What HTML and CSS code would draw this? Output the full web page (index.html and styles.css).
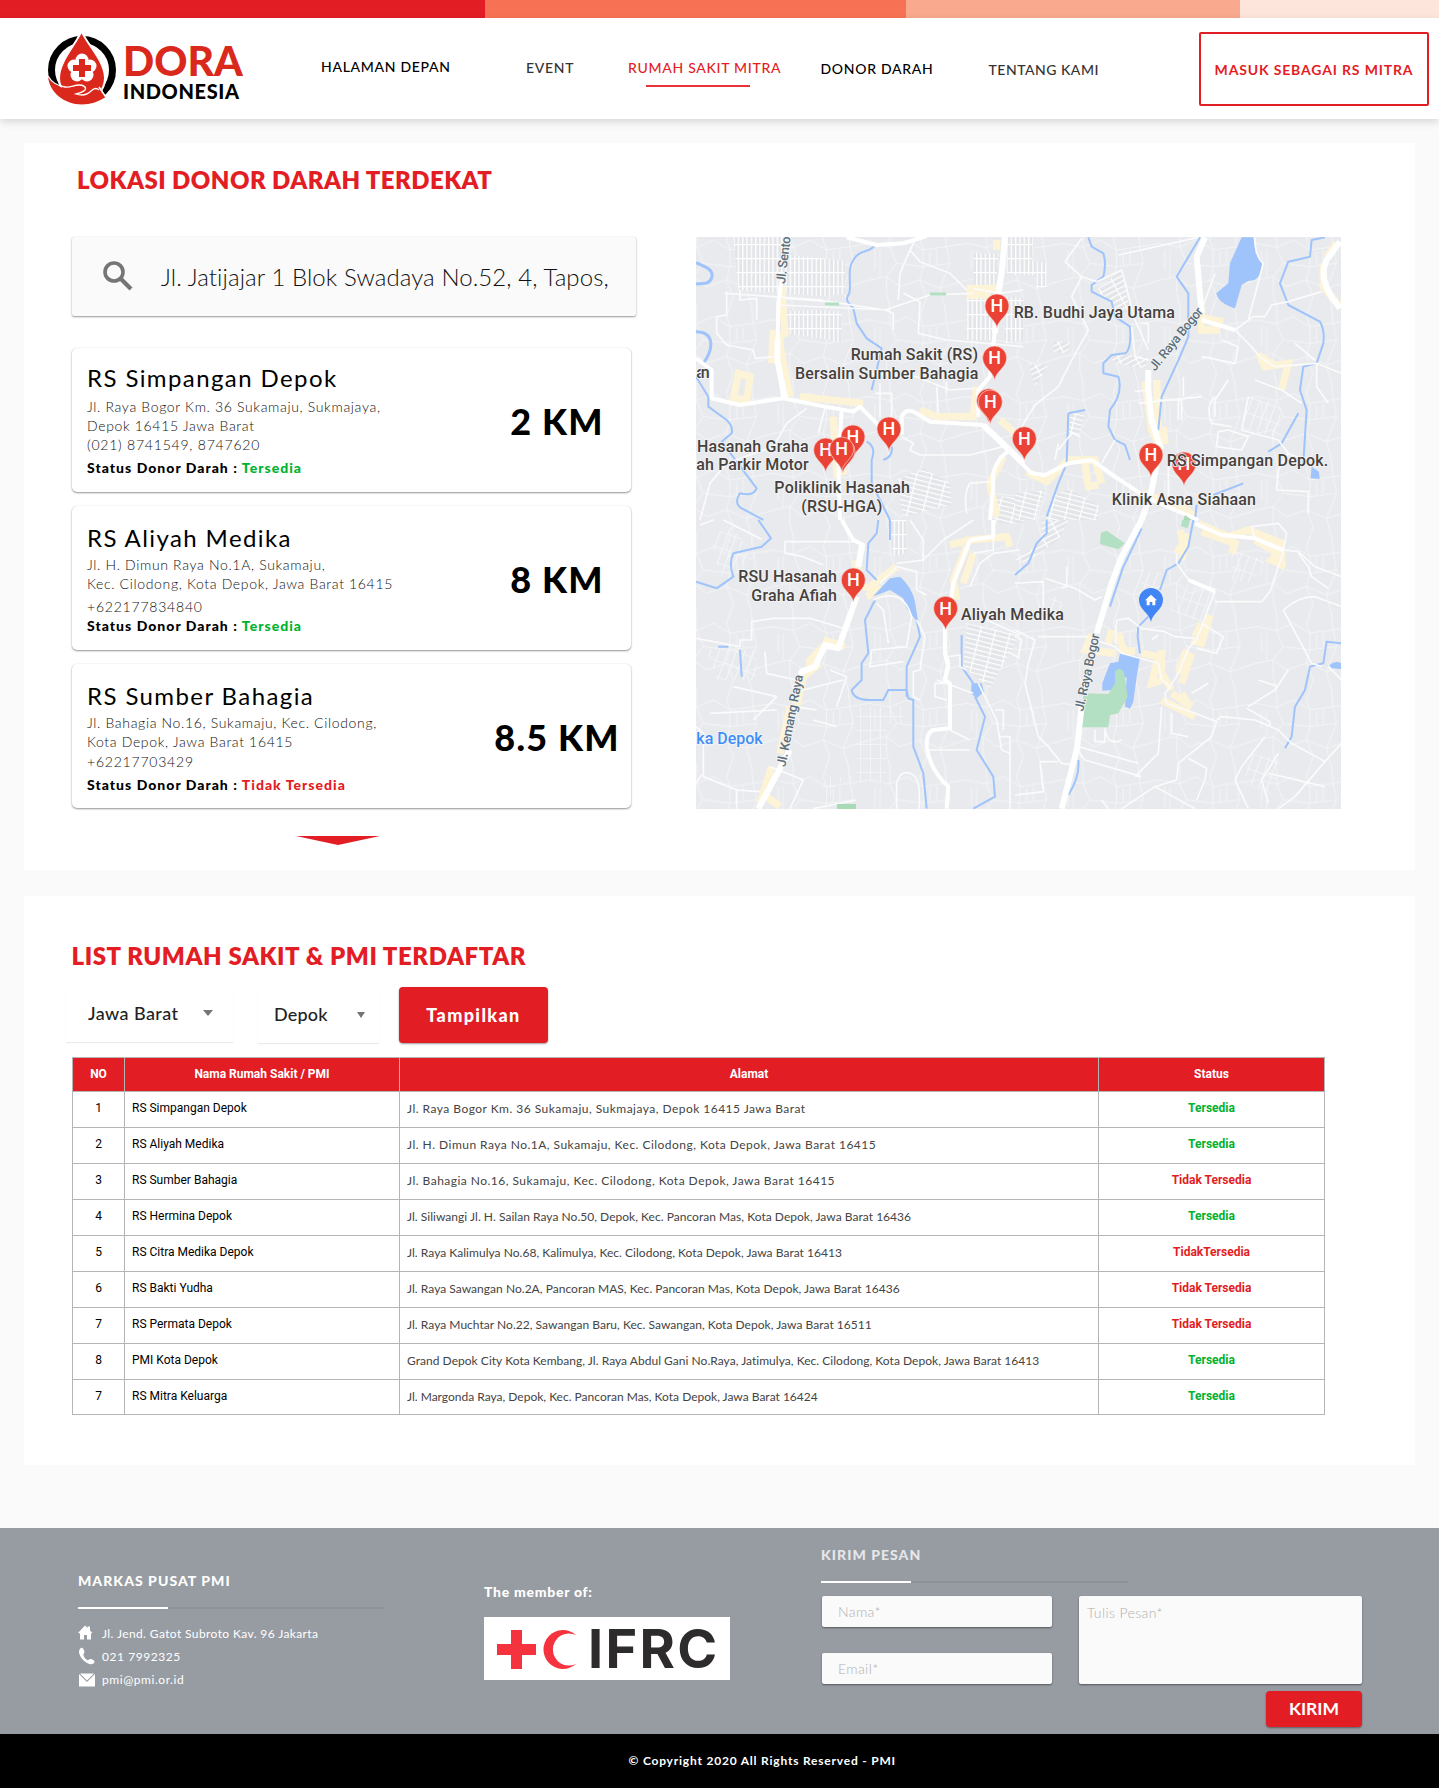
FILE: index.html
```html
<!DOCTYPE html>
<html lang="id">
<head>
<meta charset="utf-8">
<title>DORA Indonesia - Rumah Sakit Mitra</title>
<link rel="stylesheet" href="styles.css">
</head>
<body>
<div class="strip"><span class="s1"></span><span class="s2"></span><span class="s3"></span><span class="s4"></span></div>
<header class="header">
  <div class="logo">
    <svg class="logo-mark" viewBox="0 0 72 76" width="72" height="76">
      <circle cx="36" cy="40" r="30.5" fill="none" stroke="#000" stroke-width="7"/>
      <path d="M35.500 1C40 13 59 31 59 48a23 23 0 0 1-46 0C13 31 31 13 35.500 1z" fill="#da291c" stroke="#fff" stroke-width="2"/>
      <path d="M2 46c2 6 10 11 16 12 6 0 10-2 15-1 3 1 5 3 8 2l12-4 7 12C52 72 44 74.500 36 74.500 18 74.500 3 62 2 46z" fill="#da291c"/>
      <path d="M2 46c4 7 10 10 17 11 5 1 9-2 14-2 4 0 8 2 6 5-2 2-5 3-9 4 6 2 11 1 15-3 3-3 6-3 8-1" fill="none" stroke="#fff" stroke-width="1.300"/>
      <path d="M53 57l7.500 11" stroke="#fff" stroke-width="1.500"/>
      <g fill="#fff"><circle cx="36" cy="30" r="6.500"/><circle cx="28" cy="36" r="6.500"/><circle cx="44" cy="36" r="6.500"/><circle cx="31" cy="45" r="6.500"/><circle cx="41" cy="45" r="6.500"/><circle cx="36" cy="38" r="8"/></g>
      <path d="M33 29h6v6h6v6h-6v6h-6v-6h-6v-6h6z" fill="#da291c"/>
    </svg>
    <div class="logo-text"><span class="dora">DORA</span><span class="indo">INDONESIA</span></div>
  </div>
  <nav class="nav">
    <a class="n1">HALAMAN DEPAN</a>
    <a class="n2">EVENT</a>
    <a class="n3">RUMAH SAKIT MITRA</a>
    <a class="n4">DONOR DARAH</a>
    <a class="n5">TENTANG KAMI</a>
  </nav>
  <a class="login"><span>MASUK SEBAGAI RS MITRA</span></a>
</header>

<main>
<section class="panel near">
  <h2>LOKASI DONOR DARAH TERDEKAT</h2>
  <div class="near-body">
    <div class="left">
      <div class="search">
        <svg width="30" height="30" viewBox="0 0 30 30"><circle cx="11" cy="11" r="9" fill="none" stroke="#757575" stroke-width="3.600"/><path d="M17.500 17.500L28 28" stroke="#757575" stroke-width="4.200"/></svg>
        <span class="query">Jl. Jatijajar 1 Blok Swadaya No.52, 4, Tapos,</span>
      </div>
      <article class="hosp h1">
        <div class="info">
          <h3>RS Simpangan Depok</h3>
          <p>Jl. Raya Bogor Km. 36 Sukamaju, Sukmajaya,</p>
          <p>Depok 16415 Jawa Barat</p>
          <p class="phone">(021) 8741549, 8747620</p>
          <div class="status"><span>Status Donor Darah :</span> <b class="ok">Tersedia</b></div>
        </div>
        <div class="km"><span>2 KM</span></div>
      </article>
      <article class="hosp h2">
        <div class="info">
          <h3>RS Aliyah Medika</h3>
          <p>Jl. H. Dimun Raya No.1A, Sukamaju,</p>
          <p>Kec. Cilodong, Kota Depok, Jawa Barat 16415</p>
          <p class="phone">+622177834840</p>
          <div class="status"><span>Status Donor Darah :</span> <b class="ok">Tersedia</b></div>
        </div>
        <div class="km"><span>8 KM</span></div>
      </article>
      <article class="hosp h3">
        <div class="info">
          <h3>RS Sumber Bahagia</h3>
          <p>Jl. Bahagia No.16, Sukamaju, Kec. Cilodong,</p>
          <p>Kota Depok, Jawa Barat 16415</p>
          <p class="phone">+62217703429</p>
          <div class="status"><span>Status Donor Darah :</span> <b class="no">Tidak Tersedia</b></div>
        </div>
        <div class="km"><span>8.5 KM</span></div>
      </article>
      <div class="more"></div>
    </div>
    <svg class="map" viewBox="696 237 645 572" width="645" height="572">
      <defs>
        <pattern id="streets" width="290" height="230" patternUnits="userSpaceOnUse" patternTransform="scale(.3333)">
          <path d="M0 40L60 52L110 30L160 60L230 50L290 40M0 150L50 140L90 170L150 150L210 175L290 150M60 0V52L80 100L50 140V190L60 230M160 0L150 30L160 60V110L150 150L170 200L160 230M230 50L240 100L210 175L225 230M225 0L230 50M80 100L160 110L240 100M15 60V120M30 60V140M200 60V100M180 65V105" fill="none" stroke="#f6f7f9" stroke-width="2.500"/>
        </pattern>
        <pattern id="blocks" width="13" height="42" patternUnits="userSpaceOnUse"><rect width="13" height="42" fill="#e3e5e9"/><path d="M0 0V42M0 0H13" stroke="#fff" stroke-width="8"/></pattern>
        <pattern id="blocksH" width="44" height="14" patternUnits="userSpaceOnUse" patternTransform="rotate(14)"><rect width="44" height="14" fill="#e3e5e9"/><path d="M0 0V14M0 0H44" stroke="#fff" stroke-width="7"/></pattern>
        <pattern id="blocksR" width="46" height="15" patternUnits="userSpaceOnUse" patternTransform="rotate(-28)"><rect width="46" height="15" fill="#e3e5e9"/><path d="M0 0V15M0 0H46" stroke="#fff" stroke-width="7"/></pattern>
        <pattern id="faint" width="30" height="42" patternUnits="userSpaceOnUse"><path d="M0 0V42M0 0H30" stroke="#f5f6f8" stroke-width="5"/></pattern>
        <pattern id="lanes" width="24" height="46" patternUnits="userSpaceOnUse" patternTransform="rotate(20)"><path d="M0 0V46M0 0H24" stroke="#f7f8fa" stroke-width="5"/></pattern>
        <g id="pin"><path d="M0 65C-5 40-36 28-36 0a36 36 0 0 1 72 0C36 28 5 40 0 65z" fill="#ea4335" stroke="#f8d5d2" stroke-width="2"/><text y="19" text-anchor="middle" class="pin-h">H</text></g>
      </defs>
      <rect x="696" y="237" width="645" height="572" fill="#e8eaed"/>
      <rect x="696" y="237" width="645" height="572" fill="url(#streets)"/>
      <!-- north west -->
      <g transform="translate(690 230) scale(.3333)" class="tile">
        <path d="M130 22H310L300 75L465 92V192L390 198L145 180Z" fill="url(#blocks)"/>
        <path d="M365 240L455 245V335L365 322ZM275 245L365 240V320L275 310Z" fill="url(#blocks)"/>
        <path d="M850 70H925L915 200H850ZM830 205L910 200V330H830ZM950 22H1000V130H950ZM945 200L1000 205V330L945 340Z" fill="url(#blocks)"/>
        <path d="M620 750L700 715L780 760L785 825L640 860Z" fill="url(#blocksH)"/>
        <path d="M910 800H1000V880H910Z" fill="url(#blocksH)"/>
        <path class="y" d="M275 170L285 310L265 320L300 500M145 430L180 440L170 510L130 505ZM250 300L245 400M330 500L520 520M690 540L740 560H860M860 470L850 560M920 30V60M830 175H920M830 195H900M930 570L990 620M940 680L900 760L920 860M430 560L440 730L470 720"/>
        <path class="w" d="M18 98C40 110 70 115 66 140C60 165 40 160 18 162M18 305C70 305 75 350 40 400"/>
        <path class="w2" d="M555 45C540 70 510 55 490 90C470 120 485 160 478 190C460 215 480 220 490 235L500 280L530 325L575 355L560 420L545 480M18 440L55 500V530L110 570Q130 590 125 610L95 635L200 775Q190 800 150 790Q130 820 155 835L220 870M530 635Q560 650 545 690V760L600 870M605 650Q610 680 580 690"/>
        <path class="n" d="M110 185V255L80 260V310L110 345L190 360L195 385L255 380M150 180V210L200 205V270M105 190L400 210M285 205L420 215L585 240L720 195L850 190M265 225L600 240M850 175L930 190L1000 180M660 60L690 95L780 130L830 180M660 60L680 22M660 60L630 130L625 210M640 190L690 215L685 310L770 330L1000 350M585 240L610 250V300M350 535L290 580L250 650L110 700L60 760L30 870M405 535L385 610M570 460V560M555 490H605V560M635 620L670 640L660 660L690 675H840L940 650M740 470L745 550M770 455V490M540 430L680 440L780 480L850 475M830 850Q820 790 840 760L900 755"/>
        <path class="m" d="M470 22L560 45L640 40L710 18M18 385L65 420V505L150 525L280 505L405 530L490 545L510 530L570 590L635 610V560Q650 530 680 550L720 575L880 585M865 560V480L900 440L915 300M880 585L960 660L1000 700M960 660Q900 700 910 770L900 870M275 150L265 220L262 380L280 510M455 545L445 700L450 870"/>
        <path class="m b" d="M945 22L935 130L920 220L915 310M262 330V390L285 505M880 585L1000 700"/>
        <path d="M405 222H447M720 192H768" stroke="#b1dfc0" stroke-width="9"/>
      </g>
      <!-- north east -->
      <g transform="translate(1015 230) scale(.3333)" class="tile">
        <path d="M0 22H55L50 90L95 100V170L65 175L60 135H0Z" fill="url(#blocks)"/>
        <path d="M245 180L320 120L345 240L320 250Z" fill="url(#blocksR)"/>
        <path d="M115 330L165 340L160 370L115 365ZM40 400L100 405L60 470ZM280 370L400 380L390 415L300 400Z" fill="url(#blocksR)"/>
        <path d="M110 800L160 775L250 825V870H90ZM0 790L90 780L60 870H0ZM160 550H210L190 620H160Z" fill="url(#blocksH)"/>
        <path d="M700 500L800 520L790 620L680 595Z" fill="url(#lanes)"/>
        <path class="y" d="M35 725L95 755L160 690L240 690L260 760M390 455L410 600L440 660M425 450L430 600L450 640L445 590M560 230V300L615 300M565 265L625 275M730 370L750 410L820 400L800 480M740 380L780 410M925 100V170L975 230M935 80L965 40M210 700L220 770L250 765M380 790L500 830L540 860"/>
        <path d="M680 22H715L722 70Q745 90 740 110Q735 155 700 152L680 165L660 235Q610 220 604 190L640 160L645 100Z" fill="#9fc3fb"/>
        <path class="w2" d="M220 22L230 50L265 70Q275 100 265 140L230 165V185L290 215L300 260L345 290Q350 360 330 370L290 375L265 400V430L310 440Q325 490 285 540L280 590L300 630L330 645L345 690M555 22L485 140L520 190V320L495 380L440 500L430 600M930 22L890 30L885 80L820 95L795 160L820 225L915 275Q930 300 925 340L905 400L865 410L855 480L875 540L865 700M850 550L800 640L760 665M160 550L210 540M160 550L155 700L130 760L95 860M595 795L685 760"/>
        <path d="M887 745L890 710L912 725L914 747Z" fill="#9fc3fb"/>
        <path class="w2" d="M545 825L540 870M20 800"/>
        <path class="n" d="M150 95L200 25M150 95L200 140L245 155L320 120L360 270L400 360M200 140L170 200L220 300L165 400L130 470L60 525L20 590M310 75L550 22M600 130L560 240M720 22Q720 80 745 100L700 270M660 300L715 260H750L770 225L820 215L920 185M660 300L700 340L740 385L780 410L905 400L980 430M905 400V470L940 520M700 500L680 600L790 630L820 670L790 720L785 780L880 785V850M815 670L880 690M300 630L260 700M130 660L170 610L195 620M360 485L400 480M370 520L560 500M505 440V500M420 510H500V570M490 510V570M350 290L360 380L400 390M380 280H400V340M560 380L660 400L670 350L620 330M600 500Q570 530 590 580L650 590M610 605L640 600L700 620L680 660L605 650ZM640 450L600 510V560M460 700V800M720 450L800 480L860 520M840 340L900 390M120 690L130 640"/>
        <path class="m" d="M0 680L50 730L90 735L160 700L230 690L300 740L390 800L480 840L550 870M560 270L660 300"/>
        <path class="m b" d="M570 22L545 80L560 250M400 420V480L410 570L435 650L410 780L380 870M975 35L935 90Q905 150 975 235"/>
        <path d="M510 855L530 870H505Z" fill="#a8dab5"/>
      </g>
      <!-- south west -->
      <g transform="translate(690 520) scale(.3333)" class="tile">
        <path d="M830 310L990 345L900 505L820 440Z" fill="url(#blocksH)"/>
        <path d="M600 0H650V100L610 110Z" fill="url(#blocks)"/>
        <path d="M500 560H640V610H590V785H440V830H400V770H500Z" fill="url(#faint)"/>
        <path d="M50 390H200V480H80ZM60 50L120 20L200 110L90 170Z" fill="url(#lanes)"/>
        <path class="y" d="M400 360L465 380M410 370L360 420V460M390 430L340 470L320 560M300 560L270 700M245 740L210 850M230 830L270 860M495 120L520 200L570 210L530 230M540 200L620 140M780 75L840 60L950 50L960 80M830 80L790 180L800 240M850 100L820 190"/>
        <path d="M548 230L600 175L630 170Q665 200 675 245L685 310L650 265L640 235L600 210Z" fill="#9fc3fb"/>
        <path class="w2" d="M205 0L243 55L215 80L130 100Q115 130 130 170L80 205L18 185M565 0L560 40L535 70L530 150L560 180M555 240L525 300L535 400L515 430V480L485 510Q490 540 540 540H580L595 510H650L655 535L670 540V680L700 760L710 866M680 300L690 350L650 440V530M600 0V60M815 345V440L850 490M855 530L885 590L860 690L910 770L915 830L850 866M150 390L155 470M85 380H115"/>
        <path d="M845 490L875 490L882 515L860 535L843 520Z" fill="#9fc3fb"/>
        <path class="n" d="M30 15L70 0M100 0L215 58M490 65H395L285 65V100L340 110L400 135M18 355L150 380V360H185V305L250 295L360 295L460 325M225 395L230 460L320 480M420 450L470 470L440 560M18 620L40 640V770L140 810V866M35 765L18 790M140 810L210 815M570 190L620 140L680 155V210L710 225M620 130L700 120L760 60L850 0M660 0L700 60L700 120M560 250L580 270L595 370M550 240Q640 200 665 290L650 380L545 390L540 440L640 425M680 300L705 350L690 450L670 455V530L690 540M910 50V90L850 100M840 200L870 130L910 100L990 90M865 490L920 600L935 690L960 700V866M915 570H940V630M930 650H960V730M890 300L990 345M955 395L990 415M775 410L810 405V440L830 450M770 490H735V530L770 540M620 866V790Q630 750 660 760Q690 770 688 830V866M850 520L740 480M370 600L440 620M310 560L380 570M340 510L460 480M240 740L340 780L300 866M370 866L500 840M130 500L260 530L190 600M260 570L60 580M780 630L840 660M710 690L840 690"/>
        <path class="m" d="M455 0L490 60L520 75L505 140M840 60L910 50V0M840 60L790 190L780 260M765 320V400L775 430L765 480"/>
        <path class="m b" d="M517 70L505 140M500 230L445 385L405 375L375 440L335 455L320 500M300 690L205 866"/>
        <path class="m" d="M765 320V400L775 440L765 480L780 490V625L730 630Q710 635 710 680Q720 750 775 800L770 866"/>
        <rect x="441" y="852" width="57" height="15" fill="#a8dab5"/>
      </g>
      <!-- south east -->
      <g transform="translate(1015 520) scale(.3333)" class="tile">
        <path d="M500 190L600 215L560 310L465 270Z" fill="url(#lanes)"/>
        <path d="M100 230H140V300H90ZM650 90L750 120L720 190L650 180ZM380 150L440 160L420 220L370 200ZM700 700L800 720L770 820L690 790Z" fill="url(#lanes)"/>
        <path d="M80 0H160L130 60L30 130L0 120L80 70Z" fill="url(#blocksR)"/>
        <path class="y" d="M495 30L505 70L485 100M520 40L500 120M550 10L640 50L700 30L800 70V140M560 35L660 70L650 100M720 60L790 100L770 120L810 140M230 345L210 390L300 400M290 330L280 370M310 340L325 390L360 395M380 400L430 410L410 490L440 480M440 390V460L470 510M585 285L560 370L530 360M560 310L540 350M515 390L490 460M530 400L500 490M440 540L540 590M470 520L530 560M500 520L525 560"/>
        <path d="M315 400L375 412L365 470L355 545L345 566L330 560L335 470L290 510L262 512V490L285 430L310 425Z" fill="#9fc3fb"/>
        <path d="M300 455Q315 435 328 460L338 530L310 580L285 585L280 622H200L205 520L280 522L300 490Z" fill="#b3dfc2"/>
        <path d="M258 38L275 32L330 70L310 88L255 72ZM502 0H525L518 25L498 18Z" fill="#b3dfc2"/>
        <path class="w2" d="M95 0V40L65 70L40 130L0 165M380 25L340 110L325 140L285 260M535 0L520 80L490 130L455 150L435 210M400 290L370 320L368 350L375 400M980 370L935 365L925 430L885 440L870 510L840 560L830 650L810 685M190 720Q195 770 160 825"/>
        <path d="M943 436Q960 420 980 430V447L950 445Z" fill="#9fc3fb"/>
        <path class="n" d="M485 100V130L525 185L600 215L580 265L545 360L520 385L490 460L465 500L450 520L455 550L540 580L605 605L590 650L490 730L485 780L420 800L320 866M600 245L740 245L765 215L805 95L720 60L710 20L790 10L815 40L805 90M805 90L850 95L900 140L980 170M850 100L880 140L890 170L940 205M545 385L605 400L625 350L560 310M300 370L305 300L340 295L380 325L450 335L480 350L540 355M410 360L430 345M240 360L300 380L320 400L430 430L440 480L465 500M0 330L60 360L40 430L30 490L70 650L100 680L140 730L180 735M0 350L20 360L10 410M0 190L85 185V260M90 175L180 205L240 240L260 230M155 140V200L140 205M70 350H220M75 725H130M75 730L85 815L0 825M605 600L620 590L720 600L790 630L830 670L930 725L840 830L790 866M930 725L980 670M695 565L765 605V620M520 715L575 745L570 780L545 840M420 800L540 866M805 270Q850 230 900 230L980 260M805 270L890 430L920 440M980 480L940 440M820 450L780 510L700 560M730 480L790 500M190 650Q180 690 210 720L380 770M190 680L370 730M270 630Q280 680 320 660M240 630V665H270V625M440 560L430 700L360 770M470 580V640L520 650M530 520L580 490M750 650L680 740L660 780L700 866M760 760L930 800M790 700L740 780L760 850M260 840L280 866"/>
        <path class="m" d="M540 10L620 45L720 55L805 90M520 180L600 213"/>
        <path class="m b" d="M380 0L320 110L290 190L245 340M200 560L185 690L140 866"/>
      </g>
      <!-- labels and pins -->
      <g transform="translate(690 230) scale(.3333)" class="labels">
        <text x="285" y="162" transform="rotate(-83 285 162)" class="road" textLength="142">Jl. Sento</text>
        <text x="971" y="263" textLength="484">RB. Budhi Jaya Utama</text>
        <text x="482" y="391" textLength="382">Rumah Sakit (RS)</text>
        <text x="315" y="447" textLength="550">Bersalin Sumber Bahagia</text>
        <text x="19" y="443" textLength="40">an</text>
        <text x="21" y="665" textLength="335">Hasanah Graha</text>
        <text x="19" y="721" textLength="337">ah Parkir Motor</text>
        <text x="253" y="789" textLength="407">Poliklinik Hasanah</text>
        <text x="334" y="845" textLength="243">(RSU-HGA)</text>
        <use href="#pin" x="921" y="228"/><use href="#pin" x="914" y="384"/><use href="#pin" x="896" y="512"/><use href="#pin" x="901" y="516"/>
        <use href="#pin" x="597" y="597"/><use href="#pin" x="489" y="621"/><use href="#pin" x="407" y="660"/><use href="#pin" x="459" y="663"/><use href="#pin" x="455" y="657"/>
      </g>
      <g transform="translate(1015 230) scale(.3333)" class="labels">
        <text x="420" y="425" transform="rotate(-51 420 425)" class="road" textLength="232">Jl. Raya Bogor</text>
        <use href="#pin" x="28" y="626"/><use href="#pin" x="507" y="702"/><use href="#pin" x="408" y="675"/>
        <text x="455" y="708" textLength="485">RS Simpangan Depok.</text>
        <text x="290" y="824" textLength="433">Klinik Asna Siahaan</text>
      </g>
      <g transform="translate(690 520) scale(.3333)" class="labels">
        <text x="145" y="185" textLength="296">RSU Hasanah</text>
        <text x="184" y="243" textLength="257">Graha Afiah</text>
        <text x="813" y="300" textLength="309">Aliyah Medika</text>
        <text x="19" y="672" class="blue" textLength="199">ka Depok</text>
        <text x="286" y="742" transform="rotate(-79 286 742)" class="road" textLength="280">Jl. Kemang Raya</text>
        <use href="#pin" x="490" y="180"/><use href="#pin" x="767" y="265"/>
      </g>
      <g transform="translate(1015 520) scale(.3333)" class="labels">
        <text x="205" y="575" transform="rotate(-78 205 575)" class="road" textLength="236">Jl. Raya Bogor</text>
        <path d="M408 305C403 280 372 268 372 240a36 36 0 0 1 72 0C444 268 413 280 408 305z" fill="#4285f4"/>
        <path d="M390 241L408 224L426 241H421V256H412V246H404V256H395V241Z" fill="#fff"/>
      </g>
    </svg>
  </div>
</section>

<section class="panel list">
  <h2>LIST RUMAH SAKIT &amp; PMI TERDAFTAR</h2>
  <div class="filters">
    <div class="select sel1"><span>Jawa Barat</span><i></i></div>
    <div class="select sel2"><span>Depok</span><i></i></div>
    <a class="show"><span>Tampilkan</span></a>
  </div>
  <table>
    <colgroup><col class="c1"><col class="c2"><col class="c3"><col class="c4"></colgroup>
    <thead><tr><th>NO</th><th>Nama Rumah Sakit / PMI</th><th>Alamat</th><th>Status</th></tr></thead>
    <tbody>
      <tr class="wide"><td>1</td><td>RS Simpangan Depok</td><td>Jl. Raya Bogor Km. 36 Sukamaju, Sukmajaya, Depok 16415 Jawa Barat</td><td class="ok">Tersedia</td></tr>
      <tr class="wide"><td>2</td><td>RS Aliyah Medika</td><td>Jl. H. Dimun Raya No.1A, Sukamaju, Kec. Cilodong, Kota Depok, Jawa Barat 16415</td><td class="ok">Tersedia</td></tr>
      <tr class="wide"><td>3</td><td>RS Sumber Bahagia</td><td>Jl. Bahagia No.16, Sukamaju, Kec. Cilodong, Kota Depok, Jawa Barat 16415</td><td class="no">Tidak Tersedia</td></tr>
      <tr><td>4</td><td>RS Hermina Depok</td><td>Jl. Siliwangi Jl. H. Sailan Raya No.50, Depok, Kec. Pancoran Mas, Kota Depok, Jawa Barat 16436</td><td class="ok">Tersedia</td></tr>
      <tr><td>5</td><td>RS Citra Medika Depok</td><td>Jl. Raya Kalimulya No.68, Kalimulya, Kec. Cilodong, Kota Depok, Jawa Barat 16413</td><td class="no">TidakTersedia</td></tr>
      <tr><td>6</td><td>RS Bakti Yudha</td><td>Jl. Raya Sawangan No.2A, Pancoran MAS, Kec. Pancoran Mas, Kota Depok, Jawa Barat 16436</td><td class="no">Tidak Tersedia</td></tr>
      <tr><td>7</td><td>RS Permata Depok</td><td>Jl. Raya Muchtar No.22, Sawangan Baru, Kec. Sawangan, Kota Depok, Jawa Barat 16511</td><td class="no">Tidak Tersedia</td></tr>
      <tr><td>8</td><td>PMI Kota Depok</td><td>Grand Depok City Kota Kembang, Jl. Raya Abdul Gani No.Raya, Jatimulya, Kec. Cilodong, Kota Depok, Jawa Barat 16413</td><td class="ok">Tersedia</td></tr>
      <tr class="last"><td>7</td><td>RS Mitra Keluarga</td><td>Jl. Margonda Raya, Depok, Kec. Pancoran Mas, Kota Depok, Jawa Barat 16424</td><td class="ok">Tersedia</td></tr>
    </tbody>
  </table>
</section>
</main>

<footer>
  <div class="foot">
    <div class="office">
      <h4>MARKAS PUSAT PMI</h4>
      <div class="rule"></div>
      <div class="contact"><svg width="18" height="16" viewBox="0 0 18 16"><path d="M0 8L7 .5L9.500 3V1.500H12V5.500L14.500 8L13 8.500V14.500H9V10H6V14.500H2V8.500Z" fill="#fff"/></svg><span class="address">Jl. Jend. Gatot Subroto Kav. 96 Jakarta</span></div>
      <div class="contact"><svg width="18" height="18" viewBox="0 0 18 18"><path d="M3 1C5 0 6 3 6.500 5C6.800 6 5 7 5.500 8.500C6.500 11 8 12.500 9.500 13C11 13 11.500 11.500 13 12C15 12.500 17 14 16.500 15C15.500 17.500 12.500 18 9 16C4 13 1 8 1 4.500C1 3 2 1.500 3 1Z" fill="#fff"/></svg><span>021 7992325</span></div>
      <div class="contact"><svg width="18" height="16" viewBox="0 0 18 16"><path d="M1 3L9 11L17 3V15.500H1ZM2 2.500H16L9 9.500Z" fill="#fff"/></svg><span>pmi@pmi.or.id</span></div>
    </div>
    <div class="member">
      <h5>The member of:</h5>
      <div class="ifrc">
        <svg width="82" height="63" viewBox="0 0 82 63"><path d="M27 13H38V27H52V38H38V52H27V38H13V27H27Z" fill="#f5333f"/><path d="M92 18A19.500 19.500 0 1 0 92 47A16.100 16.100 0 1 1 92 18Z" fill="#f5333f"/></svg>
        <span>IFRC</span>
      </div>
    </div>
    <form class="message">
      <h4>KIRIM PESAN</h4>
      <div class="rule"></div>
      <div class="fields">
        <div class="col"><label class="field"><span>Nama*</span></label><label class="field"><span>Email*</span></label></div>
        <div class="col2"><label class="area"><span>Tulis Pesan*</span></label><a class="send"><span>KIRIM</span></a></div>
      </div>
    </form>
  </div>
  <div class="copy"><span>© Copyright 2020 All Rights Reserved - PMI</span></div>
</footer>
</body>
</html>
```
FILE: styles.css
```css
*{box-sizing:border-box}
body{margin:0;width:1439px;background:#fafafa;font-family:Lato,"Open Sans",sans-serif;color:#000}
h2,h3,h4,h5,p{margin:0;white-space:nowrap}
span,a,b{white-space:nowrap}
.ok{color:#00b22d}
.no{color:#e31d24}

.strip{display:flex;height:18px}
.s1{width:485px;background:#e31d24}
.s2{width:421px;background:#f77254}
.s3{width:334px;background:#f9aa8e}
.s4{flex:1;background:#fde5db}

.header{display:flex;align-items:flex-start;height:101px;background:#fff;box-shadow:0 3px 8px rgba(0,0,0,.14);position:relative}
.logo{display:flex;width:321px;padding:12px 0 0 46px}
.logo-mark{margin-top:0;flex:none}
.logo-text{display:flex;flex-direction:column;padding:9px 0 0 5px}
.dora{font-size:41px;line-height:44px;font-weight:900;color:#da291c}
.indo{font-size:20px;line-height:24px;font-weight:900;margin-top:-4px;letter-spacing:.62px}
.nav{display:flex;align-items:flex-start;width:878px;font-size:14px;line-height:20px;font-weight:500;letter-spacing:.7px}
.nav a{flex:none}
.n1{width:205px;margin-top:39px}
.n2{width:102px;margin-top:40px;color:#333}
.n3{width:192.5px;margin-top:40px;color:#e31d24}
.n3::after{content:"";display:block;width:104px;height:2px;margin:7px 0 0 18px;background:#ea3339}
.n4{width:168px;margin-top:41px}
.n5{margin-top:42px;color:#333;letter-spacing:.51px}
.login{display:flex;align-items:center;justify-content:center;width:230px;height:74px;margin-top:14px;border:2px solid #e31d24;border-radius:2px;font-size:14px;font-weight:700;letter-spacing:.85px;color:#e31d24}

.panel{width:1391px;margin-left:24px;background:#fff}
.panel h2{font-size:24px;line-height:30px;font-weight:800;color:#e31d24;letter-spacing:.57px}
.near{height:727px;margin-top:24px;padding:21px 0 0 48px}
.near h2{margin-left:5px;line-height:32px;letter-spacing:.44px}
.near-body{display:flex;margin-top:41px}
.left{width:624px}
.search{display:flex;align-items:center;width:564px;height:79px;padding-left:31px;background:#fafafa;border-radius:2px;box-shadow:0 1px 2px rgba(0,0,0,.4),0 0 1px rgba(0,0,0,.12)}
.search svg{margin-top:-1px}
.query{margin-left:28px;font-size:24px;font-weight:300;letter-spacing:.08px;color:#111}
.hosp{display:flex;width:559px;height:144px;margin-bottom:14px;padding-left:15px;background:#fff;border-radius:5px;box-shadow:0 1px 2px rgba(0,0,0,.42),0 0 1px rgba(0,0,0,.15)}
.hosp.h1{margin-top:32px}
.info{width:396px}
.hosp h3{font-size:24px;line-height:30px;font-weight:400;margin:15px 0 4px;letter-spacing:1.4px}
.hosp.h2 h3,.hosp.h3 h3{margin:17px 0 2px}
.hosp p{font-size:14px;line-height:19px;font-weight:300;color:#111;letter-spacing:.66px}
.hosp .phone{letter-spacing:.78px}
.h2 .phone{padding-top:4px}
.h3 .phone{padding-top:1px}
.status{font-size:14px;line-height:20px;font-weight:900;display:flex;gap:4px;margin-top:4px;letter-spacing:1.02px}
.h2 .status{margin-top:0}
.status b{font-weight:900}
.km{display:flex;flex:1;justify-content:center;align-items:center;padding:2px 0 0;font-size:36px;font-weight:900;letter-spacing:1.2px}
.more{width:84px;height:9px;margin:28px 0 0 224px;background:#e31d24;clip-path:polygon(0 0,100% 0,50% 100%)}

.map{display:block;flex:none}
.tile path{stroke-linejoin:round}
.tile .n,.tile .m,.tile .y,.tile .w,.tile .w2{fill:none;stroke:#fff}
.tile .n{stroke-width:5;stroke:#fbfbfc}
.tile .m{stroke-width:12}
.tile .b{stroke-width:18}
.tile .y{stroke:#fdf3d6;stroke-width:22;stroke-linejoin:miter}
.tile .w{stroke:#9fc3fb;stroke-width:9}
.tile .w2{stroke:#9fc3fb;stroke-width:6}
.labels text{font:500 48px Roboto,sans-serif;fill:#46413d;stroke:#f4f5f7;stroke-width:5;paint-order:stroke}
.labels .road{font-size:39px;fill:#5f7079}
.labels .blue{fill:#3f8ef7}
text.pin-h{font:500 54px Roboto,sans-serif;fill:#fff;stroke:none}

.list{height:569px;margin-top:26px;padding:45px 0 0 48px}
.list h2{margin-left:-.5px}
.filters{display:flex;align-items:flex-start;margin:16px 0 0 -6px;height:70px}
.select{display:flex;align-items:center;height:55px;padding-bottom:4px;font-size:18px;font-weight:500;color:#222;box-shadow:0 1px 1px rgba(0,0,0,.08)}
.select i{border:5px solid transparent;border-top:6px solid #757575;border-bottom:0;margin-top:1px}
.sel1{width:167px;padding-left:22px;letter-spacing:.42px}
.sel1 i{margin-left:25px}
.sel2{width:121px;margin:1px 20px 0 25px;padding-left:16px;letter-spacing:.19px}
.sel2 i{margin:2px 0 0 29px;border-width:6px 4px 0}
.show{display:flex;align-items:center;justify-content:center;width:149px;height:56px;border-radius:4px;background:#e31d24;color:#fff;font-size:18px;font-weight:900;letter-spacing:1.36px;box-shadow:0 1px 2px rgba(0,0,0,.4)}
table{border-collapse:collapse;table-layout:fixed;width:1252px;font-size:12px}
.c1{width:52px}.c2{width:275px}.c3{width:699px}.c4{width:226px}
th,td{border:1px solid #b5b5b5;padding:0 0 0 7px;height:36px;font-family:Roboto,sans-serif;font-weight:400;text-align:left;line-height:16px}
th{height:34px;padding:0 0 2px;background:#e31d24;color:#fff;font-weight:700;text-align:center}
td{padding-bottom:3px}
td:nth-child(1),td:nth-child(4){text-align:center;padding-left:0}
td:nth-child(3){font-family:Lato,sans-serif;font-weight:400;color:#444;padding-bottom:1px;padding-left:7px;letter-spacing:.03px}
.wide td:nth-child(3){letter-spacing:.47px}
td:nth-child(4){font-weight:700}
.last td{height:35px}
.last td:nth-child(3){letter-spacing:0}

footer{margin-top:63px}
.foot{display:flex;align-items:flex-start;height:206px;background:#979ca3;color:#fff}
.office{width:406px;padding:43px 0 0 78px}
h4{font-size:14px;line-height:20px;font-weight:900;letter-spacing:1.04px}
.rule{width:307px;height:2px;margin-top:15.500px;background:linear-gradient(90deg,#fff 90px,#8c919a 90px)}
.contact{display:flex;align-items:center;height:23px;font-size:12px;letter-spacing:.56px}
.address{letter-spacing:.39px}
.contact svg{flex:none}
.contact span{margin-left:6px}
.office .rule{margin-bottom:13px}
.member{width:337px;padding:54px 0 0 78px}
h5{font-size:14px;line-height:20px;font-weight:900;letter-spacing:.72px}
.ifrc{display:flex;align-items:center;width:246px;height:63px;margin-top:15px;background:#fff;color:#2d2b2c;font:700 54px/63px Inter,sans-serif;letter-spacing:2.3px}
.ifrc svg{overflow:visible;flex:none}
.ifrc span{margin-left:22px}
.message{padding:17px 0 0 78px}
.message h4{color:#e6e7e9}
.fields{display:flex;margin:13px 0 0 1px}
.col{display:flex;flex-direction:column;gap:26px;width:257px}
.field,.area{display:flex;align-items:center;width:230px;height:31px;padding-left:16px;background:#fafafa;border-radius:2px;color:#b0b0b0;font-size:14px;font-weight:300;letter-spacing:.4px;box-shadow:0 1px 2px rgba(0,0,0,.45)}
.area{width:283px;height:88px;align-items:flex-start;padding:8px 0 0 8px}
.col2{display:flex;flex-direction:column;align-items:flex-end;gap:7px}
.send{display:flex;align-items:center;justify-content:center;width:96px;height:36px;border-radius:4px;background:#e31d24;color:#fff;font-size:17.500px;font-weight:700;box-shadow:0 1px 2px rgba(0,0,0,.4)}
.copy{height:54px;padding:17px 0 0 628.500px;background:#000;color:#fff;font-size:12px;line-height:20px;font-weight:700;letter-spacing:.79px}
```
